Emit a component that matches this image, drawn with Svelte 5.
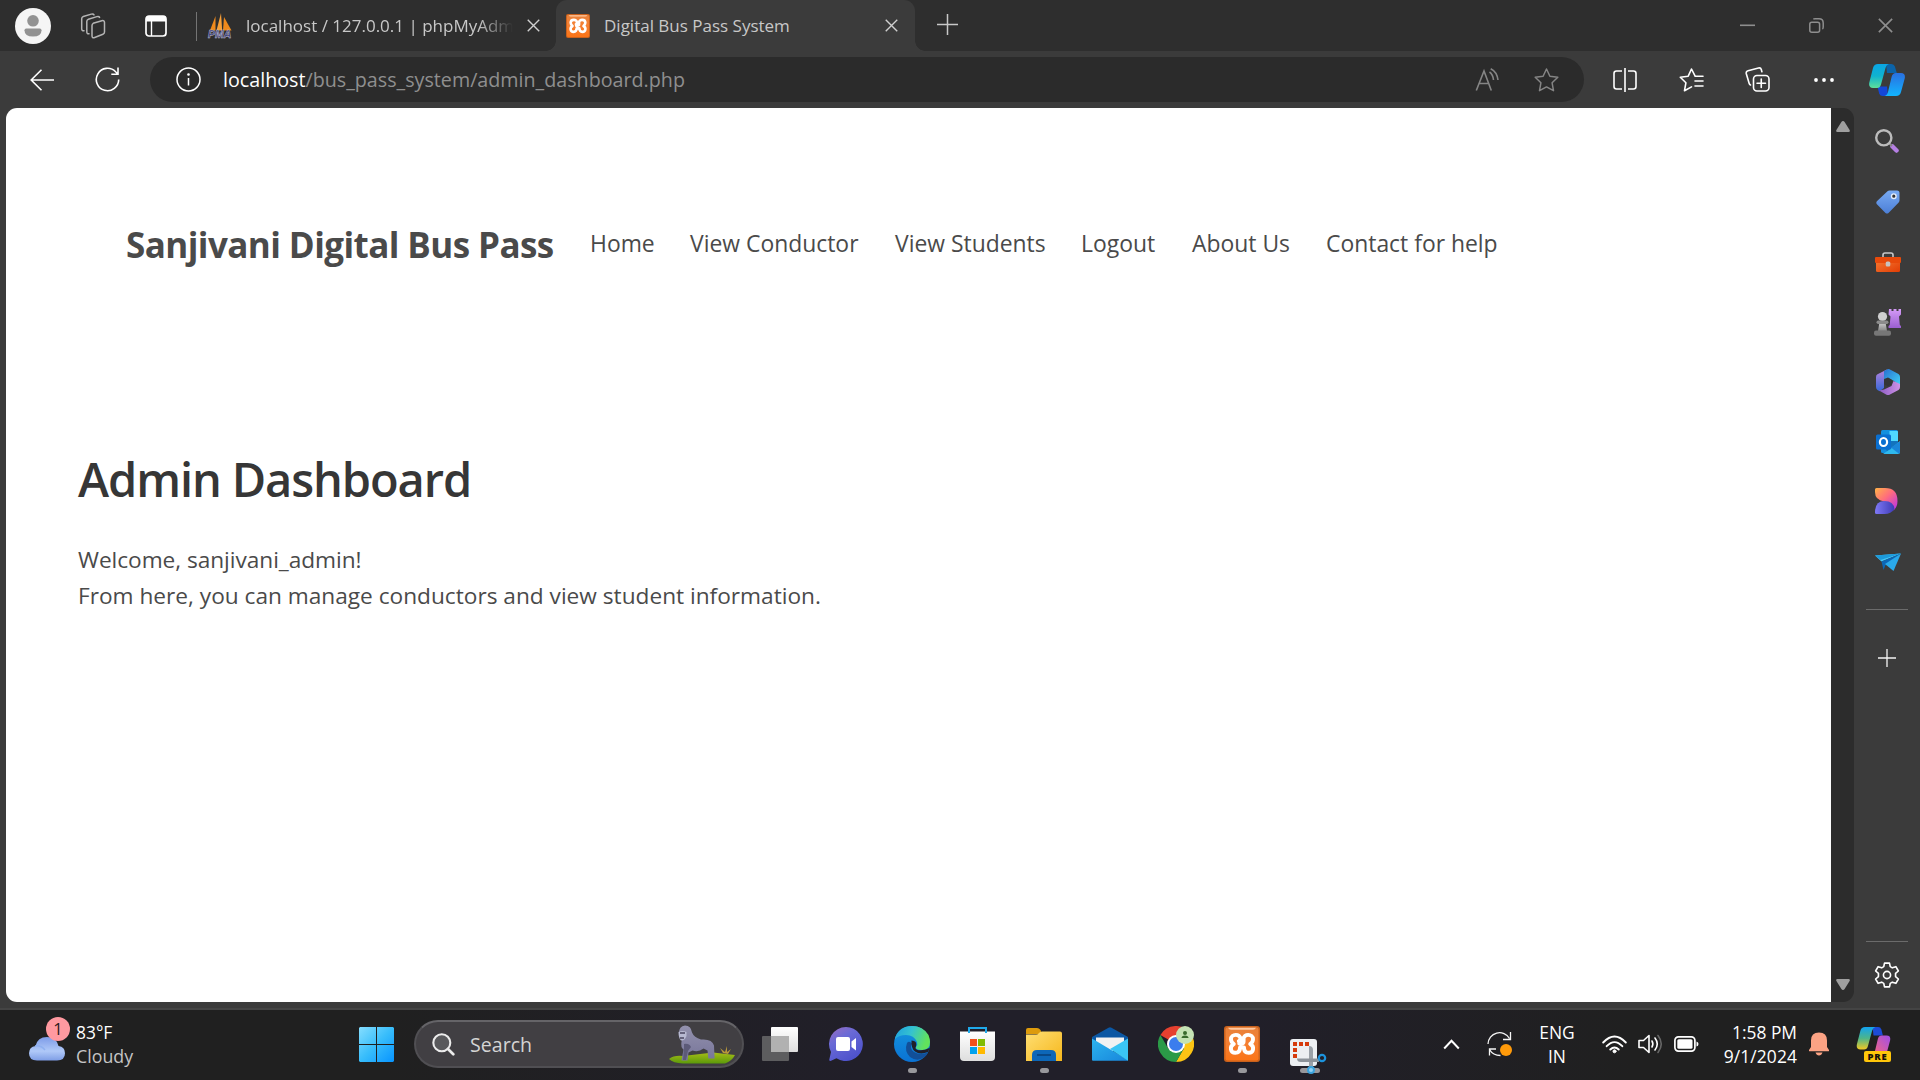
<script>
  const navLinks = [
    { label: 'Home', cls: 'n1' },
    { label: 'View Conductor', cls: 'n2' },
    { label: 'View Students', cls: 'n3' },
    { label: 'Logout', cls: 'n4' },
    { label: 'About Us', cls: 'n5' },
    { label: 'Contact for help', cls: 'n6' }
  ];
</script>

{#snippet xampp(size)}
  <svg width={size} height={size} viewBox="0 0 36 36">
    <rect width="36" height="36" rx="3" fill="#c9611c" />
    <rect x="1.5" y="1.5" width="33" height="33" rx="2" fill="url(#xamppFill)" />
    <path d="M4 1.800h28q-1 2-3 2H7q-2 0-3-2z" fill="#ffc9a0" />
    <path
      d="M14.800 15.200q1.600-.6 1.600-2.400c0-5.300-9.400-5.300-9.400.4 0 2.600 1.200 3.600 2.800 4.800-4.600 2.500-3.500 8.800 1.500 8.800 3.900 0 4.700-2.500 4.700-5.300h4c0 2.800.8 5.300 4.700 5.300 5 0 6.100-6.300 1.500-8.800 1.600-1.200 2.800-2.200 2.800-4.800 0-5.700-9.400-5.700-9.400-.4v2.700q0 2-2.200 2h-2.200"
      fill="none" stroke="#fff" stroke-width="3.900" stroke-linejoin="round" stroke-linecap="round" />
  </svg>
{/snippet}

{#snippet cross(size)}
  <svg width={size} height={size} viewBox="0 0 14 14"><path d="M.8.8l12.400 12.400M13.200.8L.8 13.200" fill="none" stroke="currentColor" stroke-width="1.500" /></svg>
{/snippet}

<svg class="defs" width="0" height="0" aria-hidden="true">
  <defs>
    <linearGradient id="xamppFill" x2="0" y2="1"><stop stop-color="#e8813a" /><stop offset=".45" stop-color="#f58033" /><stop offset="1" stop-color="#fb7417" /></linearGradient>
    <linearGradient id="cpLeft" x2="0" y2="1"><stop stop-color="#0aa5e5" /><stop offset=".5" stop-color="#0fb3cf" /><stop offset="1" stop-color="#5ee09a" /></linearGradient>
    <linearGradient id="cpRight" x2="0" y2="1"><stop stop-color="#2a6fe0" /><stop offset="1" stop-color="#12b5ff" /></linearGradient>
    <linearGradient id="preLeft" x2="0" y2="1"><stop stop-color="#12a3f0" /><stop offset=".5" stop-color="#4db58a" /><stop offset="1" stop-color="#f3c822" /></linearGradient>
    <linearGradient id="preRight" x1="1" x2="0" y2="1"><stop stop-color="#a04ee8" /><stop offset="1" stop-color="#ff6a72" /></linearGradient>
    <linearGradient id="cloudFill" x2="0" y2="1"><stop stop-color="#7d9be8" /><stop offset=".6" stop-color="#b0c9f8" /><stop offset="1" stop-color="#7f9ee6" /></linearGradient>
    <linearGradient id="winFill" x2="1" y2="1"><stop stop-color="#86deff" /><stop offset=".5" stop-color="#38bdfb" /><stop offset="1" stop-color="#0794ff" /></linearGradient>
    <linearGradient id="tagFill" x2="0" y2="1"><stop stop-color="#78aaf3" /><stop offset="1" stop-color="#4c7fd6" /></linearGradient>
    <linearGradient id="boxFill" x2="1" y2="1"><stop stop-color="#f77b33" /><stop offset="1" stop-color="#e13d05" /></linearGradient>
    <linearGradient id="pawnFill" x2="0" y2="1"><stop stop-color="#d3d3d3" /><stop offset="1" stop-color="#858585" /></linearGradient>
    <linearGradient id="rookFill" x2="0" y2="1"><stop stop-color="#d59bf7" /><stop offset="1" stop-color="#9a5fd0" /></linearGradient>
    <linearGradient id="m1" x2="0" y2="1"><stop stop-color="#b783dd" /><stop offset="1" stop-color="#3568d8" /></linearGradient>
    <linearGradient id="m2" x2="1" y2="1"><stop stop-color="#2770d0" /><stop offset="1" stop-color="#43d4f7" /></linearGradient>
    <linearGradient id="m3" x2="1"><stop stop-color="#8c5cc4" /><stop offset="1" stop-color="#cf93e6" /></linearGradient>
    <linearGradient id="dTop" x2="1" y2="1"><stop stop-color="#ffb347" /><stop offset=".45" stop-color="#ff6d7c" /><stop offset="1" stop-color="#b42df0" /></linearGradient>
    <linearGradient id="dBottom" x2="1"><stop stop-color="#7f78f5" /><stop offset="1" stop-color="#3e3bb5" /></linearGradient>
    <linearGradient id="chatFill" x2=".6" y2="1"><stop stop-color="#9a6cc0" /><stop offset=".4" stop-color="#6a6ad6" /><stop offset="1" stop-color="#4d52cc" /></linearGradient>
    <linearGradient id="edgeTop" x2="1" y2=".3"><stop stop-color="#1c9fe0" /><stop offset=".5" stop-color="#35c2d0" /><stop offset="1" stop-color="#62e35c" /></linearGradient>
    <linearGradient id="edgeLeft" x2="0" y2="1"><stop stop-color="#1596de" /><stop offset="1" stop-color="#0a72d4" /></linearGradient>
    <linearGradient id="folderFill" x2="1" y2="1"><stop stop-color="#ffdf74" /><stop offset="1" stop-color="#f6b71c" /></linearGradient>
    <linearGradient id="paper" x2="0" y2="1"><stop stop-color="#fff" /><stop offset="1" stop-color="#dedede" /></linearGradient>
    <linearGradient id="mailFill" x2="1" y2="1"><stop stop-color="#2db4ee" /><stop offset="1" stop-color="#1786dc" /></linearGradient>
    <linearGradient id="grass" x2="0" y2="1"><stop stop-color="#a6bc18" /><stop offset="1" stop-color="#5b9a0a" /></linearGradient>
    <linearGradient id="fur" x2="0" y2="1"><stop stop-color="#9391ad" /><stop offset="1" stop-color="#77759a" /></linearGradient>
  </defs>
</svg>

<div class="screen">
  <header class="tabstrip">
    <div class="slot s66">
      <svg width="36" height="36" viewBox="0 0 36 36"><circle cx="18" cy="18" r="18" fill="#f5f5f5" /><circle cx="18" cy="12.800" r="5.800" fill="#929292" /><path d="M9.500 22.200q0-1.700 1.700-1.700h13.600q1.700 0 1.700 1.700 0 6.300-8.500 6.300t-8.500-6.300z" fill="#929292" /></svg>
    </div>
    <div class="slot s54 dim">
      <svg width="26" height="26" viewBox="0 0 26 26" fill="none" stroke="currentColor" stroke-width="1.500" stroke-linejoin="round" stroke-linecap="round"><path d="M13.200 10.300l8.600-2.600q2.700-.7 2.700 1.800v9.500q0 1.700-1.600 2.300l-8.200 3.200q-2.700 1-2.700-1.700v-10q0-1.900 1.200-2.500z" /><path d="M9 20.800q-2.200.3-2.200-2V8.600q0-1.700 1.600-2.300l8.500-2.700q2-.6 2.700.8" /><path d="M4 17.800q-2.300.2-2.300-2V5.800q0-1.700 1.600-2.300l8-2.400q2-.6 2.700.8" /></svg>
    </div>
    <div class="slot s72">
      <svg width="22" height="22" viewBox="0 0 22 22"><rect x="1" y="1" width="20" height="20" rx="3" fill="none" stroke="#fff" stroke-width="1.700" /><path d="M1 6.500V3.500Q1 1 3.500 1h15Q21 1 21 3.500v3z" fill="#fff" /><path d="M6.500 6v15" stroke="#fff" stroke-width="1.400" /></svg>
    </div>
    <div class="tab idle">
      <svg class="fav" width="26" height="26" viewBox="0 0 26 26"><path d="M3 17.500L8.500 3v14.500z" fill="#f08a1c" /><path d="M9.500 17.500L14 0l1.200 17.500z" fill="#f9a13a" /><path d="M16 17.500L17 4l7.500 13.500z" fill="#f08a1c" /><text x="1" y="25" class="pma">PMA</text></svg>
      <span class="tabtitle t1">localhost / 127.0.0.1 | phpMyAdm</span>
      <span class="close">{@render cross(13)}</span>
    </div>
    <div class="tab active">
      <span class="fav">{@render xampp(24)}</span>
      <span class="tabtitle t2">Digital Bus Pass System</span>
      <span class="close">{@render cross(13)}</span>
    </div>
    <div class="slot s64 newtab">
      <svg width="21" height="21" viewBox="0 0 21 21"><path d="M10.500 0v21M0 10.500h21" stroke="currentColor" stroke-width="1.500" /></svg>
    </div>
    <div class="winctl">
      <div class="slot s69"><svg width="15" height="15" viewBox="0 0 15 15"><path d="M0 7.300h15" stroke="currentColor" stroke-width="1.600" /></svg></div>
      <div class="slot s69"><svg width="15" height="15" viewBox="0 0 15 15" fill="none" stroke="currentColor" stroke-width="1.500"><rect x=".8" y="4.300" width="9.800" height="9.900" rx="2" /><path d="M4.300 1.200Q5 .8 6 .8h4Q14.200.8 14.200 5v4q0 1.500-.8 2" /></svg></div>
      <div class="slot s69">{@render cross(15)}</div>
    </div>
  </header>

  <div class="toolbar">
    <div class="slot s66 nudge"><svg width="24" height="22" viewBox="0 0 24 22"><path d="M24 11H1.500M11.500.8L1.200 11l10.300 10.200" fill="none" stroke="#fff" stroke-width="1.600" /></svg></div>
    <div class="slot s66 nudge"><svg width="25" height="25" viewBox="0 0 25 25"><path d="M23.700 12.500A11.200 11.200 0 1 1 20.600 4.800L22.800 7M23 .5V7.200H16.300" fill="none" stroke="#fff" stroke-width="1.600" /></svg></div>
    <div class="address">
      <svg width="25" height="25" viewBox="0 0 25 25" fill="none" stroke="#fff" stroke-width="1.500"><circle cx="12.500" cy="12.500" r="11.500" /><path d="M12.500 11v7.500" /><circle cx="12.500" cy="7.500" r=".6" fill="#fff" /></svg>
      <span class="url"><b>localhost</b>/bus_pass_system/admin_dashboard.php</span>
      <span class="addr-actions">
        <svg width="24" height="24" viewBox="0 0 24 24" fill="none" stroke="currentColor" stroke-width="1.600"><path d="M1.300 22.500L9 3l7.300 19.500M4 15.500h9.800" /><path d="M14.500 4q3.500 2.500 4 8M15.700.8Q22 4 23 12" /></svg>
        <svg width="25" height="24" viewBox="0 0 25 24" fill="none" stroke="currentColor" stroke-width="1.500" stroke-linejoin="round"><path d="M12.500 1l3.400 7.200 7.900 1.100-5.700 5.500 1.400 7.900-7-3.800-7 3.800 1.400-7.900L1.200 9.300l7.900-1.100z" /></svg>
      </span>
    </div>
    <div class="tools">
      <div class="slot s66"><svg width="24" height="24" viewBox="0 0 24 24" fill="none" stroke="#fff" stroke-width="1.600"><path d="M9 3H3.500Q1 3 1 5.500v13Q1 21 3.500 21H9M15 3h5.500Q23 3 23 5.500v13q0 2.500-2.500 2.500H15M12 0v24" /></svg></div>
      <div class="slot s66"><svg width="25" height="24" viewBox="0 0 25 24" fill="none" stroke="#fff" stroke-width="1.600" stroke-linejoin="round" stroke-linecap="round"><path d="M16 7.800L12.500 1 9.200 8.200 1.300 9.300l5.600 5.500L5.500 22.700l7-3.800M16 8.300h8M16 13h8M16 18h8" /></svg></div>
      <div class="slot s66"><svg width="25" height="25" viewBox="0 0 25 25" fill="none" stroke="#fff" stroke-width="1.600" stroke-linecap="round"><rect x="8.500" y="8.500" width="15.500" height="15.500" rx="3.500" /><path d="M16.250 12v8.500M12 16.250h8.500M5.500 18q-1-.3-1.300-1.500L1.300 6.800Q.7 4.500 3 3.800L13.500 1q2.200-.5 2.800 1.500l.6 2.200" /></svg></div>
      <div class="slot s66 shift"><svg width="20" height="4" viewBox="0 0 20 4" fill="#fff"><circle cx="2" cy="2" r="1.900" /><circle cx="10" cy="2" r="1.900" /><circle cx="18" cy="2" r="1.900" /></svg></div>
      <div class="slot s60 shift"><svg width="36" height="32" viewBox="0 0 36 32"><path d="M17 0h5.500q2.500 0 3.400 2.600L27.800 9H18z" fill="#0b63a8" /><path d="M19 32h-5.500q-2.500 0-3.300-2.600L8.500 22.500H18z" fill="#1447d8" /><path d="M9 0h11q-2.500.5-3.500 4l-4.500 16.500q-1 3.500-4 3.500H4Q-.8 24 .3 18.500L4 4Q5 0 9 0z" fill="url(#cpLeft)" /><path d="M27 32H15.500q2.500-.5 3.500-4l3.700-15.500Q23.700 9 26.700 9H32q4.800 0 3.700 5.500L32 28q-1 4-5 4z" fill="url(#cpRight)" /></svg></div>
    </div>
  </div>

  <div class="body">
    <main class="page">
      <nav>
        <strong class="brand">Sanjivani Digital Bus Pass</strong>
        {#each navLinks as link}
          <span class="link {link.cls}">{link.label}</span>
        {/each}
      </nav>
      <h1>Admin Dashboard</h1>
      <p class="p1">Welcome, sanjivani_admin!</p>
      <p>From here, you can manage conductors and view student information.</p>
    </main>
    <div class="scrollbar">
      <svg width="14" height="11" viewBox="0 0 14 11"><path d="M7 0q1 0 1.600 1l5 8q.8 2-1 2H1.400q-1.800 0-1-2l5-8Q6 0 7 0z" fill="#9f9f9f" /></svg>
      <svg class="flip" width="14" height="11" viewBox="0 0 14 11"><path d="M7 0q1 0 1.600 1l5 8q.8 2-1 2H1.400q-1.800 0-1-2l5-8Q6 0 7 0z" fill="#9f9f9f" /></svg>
    </div>
    <aside>
      <div class="cell lens"><svg width="24" height="24" viewBox="0 0 24 24"><path d="M17.500 17.500l4 4" stroke="#b57fe3" stroke-width="4.500" stroke-linecap="round" /><path d="M14 14l3 3" stroke="#888" stroke-width="2" /><circle cx="8.800" cy="8.800" r="7.600" fill="none" stroke="#bcbcbc" stroke-width="2.400" /></svg></div>
      <div class="cell"><svg width="24" height="24" viewBox="0 0 24 24"><path d="M13.500.5H21q2.500 0 2.500 2.500v7.500q0 1.200-.8 2L12.500 23q-1.500 1.200-3 0L.9 14.300q-1.200-1.500 0-3L11.500 1.300q.8-.8 2-.8z" fill="url(#tagFill)" /><circle cx="17.800" cy="6.200" r="2.300" fill="#333" stroke="#e5edfb" stroke-width="1.400" /></svg></div>
      <div class="cell"><svg width="26" height="20" viewBox="0 0 26 20"><path d="M8 6V3q0-2 2-2h6q2 0 2 2v3" fill="none" stroke="#c8c8c8" stroke-width="1.600" /><rect x="1" y="7" width="24" height="13" rx="1.500" fill="url(#boxFill)" /><rect y="5" width="26" height="6" rx="1" fill="#e84a0b" /><rect x="10.700" y="9.500" width="4.600" height="5" rx="1.500" fill="#c7c3bf" /></svg></div>
      <div class="cell"><svg width="27" height="27" viewBox="0 0 27 27"><path d="M15 0h2.500v2h2V0h3v2h2V0H27v5.500l-2 2 .8 8.500 1.200 1v2H14.500v-2l1.200-1 .8-8.500-2-2z" fill="url(#rookFill)" /><circle cx="8.500" cy="7.500" r="4.600" fill="#cfcfcf" /><path d="M5.500 13h6l1.500 9H4z" fill="url(#pawnFill)" /><rect x="2.500" y="11.500" width="12" height="3.400" rx="1.700" fill="#8b8b8b" /><rect y="21.500" width="17" height="5.200" rx="2" fill="#777" /></svg></div>
      <div class="cell"><svg width="24" height="26" viewBox="0 0 24 26"><path d="M11 .4L1.500 5.200Q0 6 0 8v10q0 2 1.500 3l2 1.300L8 19V9l6-6.500z" fill="url(#m1)" /><path d="M8 2l4-2q.8-.2 1.500.2L22.500 5Q24 6 24 8v9l-6-5-6-3.500L8 10z" fill="url(#m2)" /><path d="M24 15v3q0 2-1.500 3l-9 4.700q-1.500.6-3 0L3 21.500l5-1 7.500-3.500 2-5z" fill="url(#m3)" /><path d="M12 8.800l3.800 2.100v4.300L12 17.300l-3.800-2.100v-4.300z" fill="#343536" /></svg></div>
      <div class="cell"><svg width="24" height="24" viewBox="0 0 24 24"><rect x="5" width="17" height="23" rx="1.500" fill="#1490df" /><path d="M13.500 1H21q1 0 1 1v9h-8.500z" fill="#50d9ff" /><path d="M5 11h17v3L12 23z" fill="#1373bd" /><path d="M24 11v11q0 2-2 2H7l8-5.500z" fill="#2fb9ee" /><path d="M24 11.500V22q0 1-1 1.800l-8-6.300z" fill="#1a85d8" /><rect y="4.500" width="15" height="15" rx="1.500" fill="#0a6fd0" /><ellipse cx="7.500" cy="12" rx="3.600" ry="4" fill="none" stroke="#fff" stroke-width="2.200" /></svg></div>
      <div class="cell lens"><svg width="23" height="26" viewBox="0 0 23 26"><path d="M0 1.500Q0 0 1.500 0H10q12.500 0 12.500 13 0 6-4 9.500-1-8-9.500-9Q0 12 0 4z" fill="url(#dTop)" /><path d="M0 24.500Q0 13 9.500 13q9 0 10 8-3.500 5-10 5h-8Q0 26 0 24.500z" fill="url(#dBottom)" /></svg></div>
      <div class="cell"><svg width="26" height="19" viewBox="0 0 26 19"><path d="M0 2.500L26 .5 6.500 8.500z" fill="#45c9f6" /><path d="M6.500 8.500L26 .5 10.500 12 8.500 17z" fill="#0c66b5" /><path d="M10 11L26 .5 18.500 18z" fill="#2aa9ea" /><path d="M0 2.500L26 .5 5.500 7z" fill="#1c9adc" /></svg></div>
      <hr />
      <div class="plus"><svg width="18" height="18" viewBox="0 0 18 18"><path d="M9 0v18M0 9h18" stroke="#f4f4f4" stroke-width="1.300" /></svg></div>
      <hr class="low" />
      <div class="gear"><svg width="26" height="26" viewBox="0 0 24 24" fill="none" stroke="#fff" stroke-width="1.500" stroke-linejoin="round"><circle cx="12" cy="12" r="3.300" /><path d="M9.700 1h4.600l.7 3.300 1.900 1.100 3.300-1.100 2.300 4-2.600 2.300v2.800l2.600 2.300-2.300 4-3.300-1.100-1.900 1.100-.7 3.300H9.700L9 19.700l-1.900-1.100-3.300 1.100-2.300-4 2.600-2.300v-2.800L1.500 8.300l2.300-4 3.300 1.100L9 4.300z" /></svg></div>
    </aside>
  </div>

  <footer>
    <div class="weather">
      <div class="cloud">
        <svg width="36" height="24" viewBox="0 0 36 24"><path d="M8 23.500q-8 0-8-7.200Q0 10 6.500 9 8.500 0 18 0t11.500 9q6.500.7 6.500 7.300 0 7.200-8 7.200z" fill="url(#cloudFill)" /><path d="M6 9q6-1 10 4" fill="none" stroke="#8fb0f0" stroke-width="1.500" /></svg>
        <span class="badge">1</span>
      </div>
      <div class="wtext"><span>83°F</span><span class="cond">Cloudy</span></div>
    </div>
    <div class="dock">
      <div class="start"><svg width="35" height="35" viewBox="0 0 35 35"><path d="M1 0h16v17H0V1zM18 0h16l1 1v16H18zM0 18h17v17H1l-1-1zM18 18h17v16l-1 1H18z" fill="url(#winFill)" /></svg></div>
      <div class="search">
        <svg width="23" height="23" viewBox="0 0 23 23" fill="none" stroke="#ececec" stroke-linecap="round"><circle cx="9.800" cy="9.800" r="8.500" stroke-width="2.100" fill="#59595c" /><path d="M16 16l5.300 5.300" stroke-width="2.700" /></svg>
        <span>Search</span>
        <svg class="gorilla" width="66" height="39" viewBox="0 0 66 39"><path d="M0 34q5-4 14-3l30-3.500 22 2.500q-3 6-10 8.500H14Q4 38 0 34z" fill="url(#grass)" /><path d="M54 28l-3-5 5 4 2-6v6l4-3-3 5z" fill="#b9983a" /><path d="M10 8Q10 1 16 .5q6 0 7 7 2 5 9 7 11-1 13 6l.6 13h-6.300l-.8-8-4-2q-5 4-11 2l-4 2-1 8h-6l2-11q-3-2-2-8l1-3q-4-2-3.500-6z" fill="url(#fur)" /><path d="M15 19q5-1 7 3l-3 4-2 9h-3l1-12z" fill="#5c5a78" /><path d="M9.500 7q4-2 8 0v4q-2 5-5.500 4.500-2.500-2-2.500-8.500z" fill="#b8b9d2" /><path d="M11 8h5M11 13h4" stroke="#4a4660" stroke-width="1.300" /></svg>
      </div>
      <div class="app"><svg width="36" height="34" viewBox="0 0 36 34"><rect y="9" width="27" height="25" rx="1" fill="#5d5d5f" /><rect x="9" width="27" height="25" rx="1" fill="url(#paper)" /><path d="M9 9h18v16H9z" fill="#b1b1b1" /></svg></div>
      <div class="app"><svg width="34" height="34" viewBox="0 0 34 34"><path d="M17 0a17 17 0 1 1-9.500 31.200L1.500 34Q0 34 .3 32.500L2 25A17 17 0 0 1 17 0z" fill="url(#chatFill)" /><rect x="7" y="10" width="14" height="14" rx="2" fill="#fff" /><path d="M22.500 14.500L27 11v12.500l-4.500-3.500z" fill="#fff" /></svg></div>
      <div class="app"><svg width="36" height="36" viewBox="0 0 36 36"><circle cx="18" cy="18" r="18" fill="url(#edgeLeft)" /><path d="M1 12Q5 0 18 0q11 0 16.500 9Q36 13 36 16q0 8-8 8-7 0-6-3 2-2 1-5Q20 9 12 9 5 9 1 13z" fill="url(#edgeTop)" /><path d="M13 17q-3 8 3 14 7 5 14 .5 3-2 4-5-8 3-14-.5-5-3-2-8.500-3-3-5-.5z" fill="#124f98" /><path d="M17.500 14.500q6 0 4.500 6-1.500 2 1 3.200 5 2 13-2L34 26q-8 3-13-.5-4-3-3.500-11z" fill="#211f29" /></svg><i></i></div>
      <div class="app"><svg width="35" height="36" viewBox="0 0 35 36"><path d="M0 5.500h35V31q0 4-4 4H4q-4 0-4-4z" fill="url(#paper)" /><path d="M9 7V2h17v5" fill="none" stroke="#1fa9ea" stroke-width="2" /><path d="M10 13h7v7h-7z" fill="#f1511b" /><path d="M18 13h7v7h-7z" fill="#80bb03" /><path d="M10 21h7v7h-7z" fill="#00a2ed" /><path d="M18 21h7v7h-7z" fill="#ffb900" /></svg></div>
      <div class="app"><svg width="36" height="33" viewBox="0 0 36 33"><path d="M0 2q0-2 2-2h9q2 0 3.500 2l1.500 4H0z" fill="#dd9b0c" /><path d="M0 6.500h10q2 0 3-1.500 1-1.500 3-1.500h18q2 0 2 2V33H0z" fill="url(#folderFill)" /><path d="M6 33v-6q0-5 5-5h14q5 0 5 5v6z" fill="#0d67b8" /><path d="M11 27h14" stroke="#0a4680" stroke-width="1.800" /></svg><i></i></div>
      <div class="app"><svg width="36" height="34" viewBox="0 0 36 34"><path d="M0 10L16.500.7q1.500-1 3 0L36 10v10H0z" fill="#0b57a4" /><path d="M4 10.500h28V24H4z" fill="#f2f2f2" /><path d="M0 11.500L36 33q0 .7-1 .7H1q-1 0-1-1z" fill="url(#mailFill)" /><path d="M36 11.500V33.700L18 22z" fill="#3ac5f5" /></svg></div>
      <div class="app"><svg width="36" height="36" viewBox="0 0 36 36"><path d="M18 18L2.400 9A18 18 0 0 1 33.600 9z" fill="#e5402f" /><path d="M18 9h15.600A18 18 0 0 1 18 36l7.800-13.500z" fill="#fcc414" /><path d="M2.400 9A18 18 0 0 0 18 36l7.800-13.500H10.200z" fill="#2b9a47" /><circle cx="18" cy="18" r="9" fill="#fff" /><circle cx="18" cy="18" r="7" fill="#3b7ded" /><circle cx="27" cy="9" r="9" fill="#c5e3b4" /><circle cx="27" cy="7" r="2" fill="#386a2c" /><path d="M23.500 12q0-2.500 3.500-2.500t3.500 2.500z" fill="#386a2c" /></svg></div>
      <div class="app">{@render xampp(36)}<i></i></div>
      <div class="app snip"><svg width="37" height="37" viewBox="0 0 37 37"><rect width="27" height="27" rx="3" fill="#eceff2" /><path d="M3 5h17M5 9v10" stroke="#d63a0c" stroke-width="4" stroke-dasharray="4 2" fill="none" /><path d="M19 7q4 0 4 4v18h-4z" fill="#9aa1a8" /><path d="M7 19.500h22v3.500H11q-4 0-4-3.500z" fill="#8c939a" /><circle cx="32" cy="19" r="3.200" fill="none" stroke="#1c93dd" stroke-width="2.200" /></svg><i class="wide"></i><b></b></div>
    </div>
    <div class="tray">
      <svg width="17" height="11" viewBox="0 0 17 11"><path d="M1.200 9.500l7.300-7.700 7.300 7.700" fill="none" stroke="#fff" stroke-width="2" /></svg>
      <svg class="sync" width="26" height="26" viewBox="0 0 26 26" fill="none" stroke="#f5f5f5" stroke-width="1.300"><path d="M1 13A11.500 11.500 0 0 1 22.500 7.500M23.500 1v7.500H16M2.500 24.500V18H9M2.500 18.500q3.500 6 11 6" /><circle cx="19" cy="19" r="6" fill="#ff9a0a" stroke="none" /></svg>
      <div class="lang"><span>ENG</span><span>IN</span></div>
      <svg class="wifi" width="25" height="19" viewBox="0 0 25 19" fill="none" stroke="#fff" stroke-width="1.900" stroke-linecap="round"><path d="M1.200 7.500q11.300-12 22.600 0M4.700 11.200q7.800-8.200 15.600 0M8.300 14.500q4.200-4.200 8.400 0" /><circle cx="12.500" cy="16.300" r="1.500" fill="#fff" stroke-width="1" /></svg>
      <svg class="sound" width="25" height="20" viewBox="0 0 25 20" fill="none" stroke="#fff" stroke-width="1.600" stroke-linejoin="round" stroke-linecap="round"><path d="M1 6.500h4.500L11 1.500v17l-5.500-5H1zM14 7q1.800 3 0 6M17 4q4.500 6 0 12" /><path d="M20 1.500q6.500 8.500 0 17" stroke="#666" /></svg>
      <svg class="battery" width="25" height="16" viewBox="0 0 25 16"><rect x=".9" y=".9" width="20" height="14.200" rx="3.500" fill="none" stroke="#fff" stroke-width="1.700" /><rect x="3.300" y="3.300" width="15.200" height="9.400" rx="1.500" fill="#fff" /><path d="M22.500 5.500q2 .5 2 2.500t-2 2.500z" fill="#fff" /></svg>
      <div class="clock"><span>1:58 PM</span><span class="date">9/1/2024</span></div>
      <svg class="bell" width="20" height="24" viewBox="0 0 20 24" fill="#fca384"><path d="M10 .5q8 0 8 8V15l2 3q.4 1.200-.8 1.200H.8Q-.4 19.200 0 18l2-3V8.500q0-8 8-8zM6.500 20.500h7q-1 3-3.500 3t-3.500-3z" /></svg>
      <div class="pre"><svg width="35" height="30" viewBox="0 0 36 32"><path d="M17 0h6q2.500 0 3.400 2.600L28 9H18z" fill="#1c4bd8" /><path d="M9 0h11q-2.500.5-3.500 4l-4.500 16.500q-1 3.500-4 3.500H4Q-.8 24 .3 18.500L4 4Q5 0 9 0z" fill="url(#preLeft)" /><path d="M27 32H15.500q2.500-.5 3.500-4l3.700-15.500Q23.700 9 26.700 9H32q4.800 0 3.700 5.500L32 28q-1 4-5 4z" fill="url(#preRight)" /></svg><span>PRE</span></div>
    </div>
  </footer>
</div>

<style>
  :global(body) { margin: 0; overflow: hidden; background: #3b3b3b; }
  * { box-sizing: border-box; }
  svg { display: block; flex: none; }
  .defs { position: absolute; }
  .screen { width: 1920px; height: 1080px; display: flex; flex-direction: column; font-family: 'Open Sans', 'Noto Sans', sans-serif; background: #3b3b3b; color: #fff; white-space: nowrap; }
  .slot { display: flex; align-items: center; justify-content: center; flex: none; }
  .s54 { width: 54px; } .s60 { width: 60px; } .s64 { width: 64px; } .s66 { width: 66px; } .s69 { width: 69px; } .s72 { width: 72px; }
  .nudge { padding-right: 1px; }
  .shift { padding-left: 2px; }

  .tabstrip { height: 51px; display: flex; background: #2e2e2e; flex: none; }
  .dim { color: #b4b4b4; }
  .tab { display: flex; align-items: center; height: 51px; flex: none; font-size: 17px; color: #c8c8c8; }
  .idle { width: 364px; padding-left: 15px; position: relative; }
  .idle::before { content: ''; position: absolute; left: 4px; top: 12px; width: 1px; height: 29px; background: #747474; }
  .active { width: 359px; padding-left: 10px; background: #3b3b3b; border-radius: 11px 11px 0 0; position: relative; }
  .active::before, .active::after { content: ''; position: absolute; bottom: 0; width: 10px; height: 10px; }
  .active::before { left: -10px; background: radial-gradient(circle at 0 0, #2e2e2e 9.500px, #3b3b3b 10px); }
  .active::after { right: -10px; background: radial-gradient(circle at 100% 0, #2e2e2e 9.500px, #3b3b3b 10px); }
  .fav { width: 26px; flex: none; }
  .t1 { width: 270px; margin-left: 13px; mask-image: linear-gradient(90deg, #000 232px, transparent 267px); }
  .t2 { width: 270px; margin-left: 12px; }
  .close { margin-left: 11px; color: #d0d0d0; }
  .newtab { color: #c8c8c8; padding-bottom: 2px; }
  .winctl { display: flex; margin-left: auto; color: #8e8e8e; }
  .pma { font: italic 900 10.500px 'Liberation Sans', sans-serif; fill: #2c2d6b; stroke: #c4c4dc; stroke-width: .5px; }

  .toolbar { height: 57px; padding: 0 4px 0 9px; display: flex; align-items: center; flex: none; }
  .address { width: 1434px; height: 45px; margin-left: 9px; padding: 0 25px 0 26px; border-radius: 23px; background: #2b2b2b; display: flex; align-items: center; }
  .url { margin-left: 22px; font-size: 19.700px; color: #8f8f8f; }
  .url b { font-weight: 400; color: #fff; }
  .addr-actions { margin-left: auto; display: flex; gap: 35px; color: #858585; }
  .tools { display: flex; margin-left: auto; }

  .body { height: 902px; display: flex; flex: none; padding: 0 0 8px 6px; }
  .page { width: 1825px; height: 894px; background: #fff; border-radius: 11px 0 0 11px; color: #4a4a4a; padding: 95px 0 0 72px; }
  nav { display: flex; align-items: center; padding-left: 48px; height: 82px; }
  .brand { font-size: 35px; font-weight: 700; width: 464px; color: #4a4a4a; letter-spacing: -.58px; }
  .link { font-size: 22.900px; padding-bottom: 1px; }
  .n1 { width: 100px; } .n2 { width: 205px; } .n3 { width: 186px; } .n4 { width: 111px; } .n5 { width: 134px; }
  h1 { margin: 158px 0 0; height: 72px; line-height: 72px; font-size: 47px; font-weight: 600; color: #363636; letter-spacing: -1.100px; }
  p { margin: 0; line-height: 36px; font-size: 22.660px; }
  .p1 { margin-top: 27px; letter-spacing: -.04px; }
  .scrollbar { width: 23px; height: 894px; background: #2c2c2c; border-radius: 0 11px 11px 0; display: flex; flex-direction: column; justify-content: space-between; align-items: center; padding: 13px 0 12px; }
  .flip { transform: rotate(180deg); }
  aside { width: 66px; height: 902px; display: flex; flex-direction: column; align-items: center; padding-top: 4px; }
  .cell { height: 60px; display: flex; align-items: center; flex: none; padding-left: 1px; }
  .lens { padding: 0 1px 2px 0; }
  hr { width: 42px; height: 1px; border: 0; margin: 17px 0 0; background: #6b6b6b; flex: none; }
  .plus { margin-top: 39px; }
  hr.low { margin-top: 274px; }
  .gear { margin-top: 20px; }

  footer { height: 70px; flex: none; display: flex; align-items: center; background: linear-gradient(90deg, #202020 0 20%, #211f29 45% 65%, #202020 85%); box-shadow: 0 -2px 0 #444; font-size: 17.400px; padding-bottom: 2px; }
  .weather { display: flex; width: 343px; padding-left: 29px; align-items: center; }
  .cloud { position: relative; padding-top: 14px; margin-top: -4px; }
  .badge { position: absolute; left: 17px; top: -6px; width: 24px; height: 24px; border-radius: 50%; background: #ff99a0; color: #2b1a1c; text-align: center; line-height: 24px; font-size: 16.500px; }
  .wtext, .lang, .clock { display: flex; flex-direction: column; line-height: 24px; padding-bottom: 1px; }
  .wtext { margin-left: 11px; }
  .cond { color: #c5c5c5; font-size: 17.800px; }
  .dock { display: flex; align-items: center; height: 68px; }
  .start { width: 71px; padding-left: 16px; }
  .search { width: 330px; height: 48px; border-radius: 24px; background: #413f43; border: 2px solid #504f53; border-top-color: #656468; display: flex; align-items: center; padding: 0 7px 0 16px; }
  .search span { margin-left: 15px; font-size: 19.600px; color: #d4d4d4; }
  .gorilla { margin-left: auto; }
  .app { width: 66px; height: 68px; display: flex; align-items: center; justify-content: center; position: relative; }
  .search + .app { margin-left: 3px; }
  .search ~ .app > svg { margin-left: -1px; }
  .search + .app > svg { margin-left: 0; }
  .app i { position: absolute; left: 29px; top: 58px; width: 9px; height: 5px; border-radius: 3px; background: #98989c; }
  .app i.wide { left: 25px; width: 20px; }
  .app b { position: absolute; left: 32px; top: 56px; width: 8px; height: 8px; border: 2px solid #3ba2dc; border-radius: 4px; background: #8fd0f4; }
  .snip { padding: 26px 0 0 2px; }
  .tray { display: flex; align-items: center; margin-left: auto; padding-right: 29px; height: 68px; }
  .sync { margin-left: 27px; }
  .lang { width: 44px; text-align: center; margin-left: 22px; }
  .wifi { margin-left: 23px; } .sound { margin-left: 11px; } .battery { margin-left: 11px; }
  .clock { width: 98px; text-align: right; }
  .date { letter-spacing: .1px; }
  .bell { margin-left: 12px; }
  .pre { position: relative; margin-left: 27px; height: 34px; }
  .pre span { position: absolute; left: 8px; top: 24px; width: 27px; height: 11px; border-radius: 2px; background: #ffc60a; color: #15120a; font-size: 9.500px; line-height: 11px; font-weight: 800; text-align: center; letter-spacing: .8px; }
</style>
